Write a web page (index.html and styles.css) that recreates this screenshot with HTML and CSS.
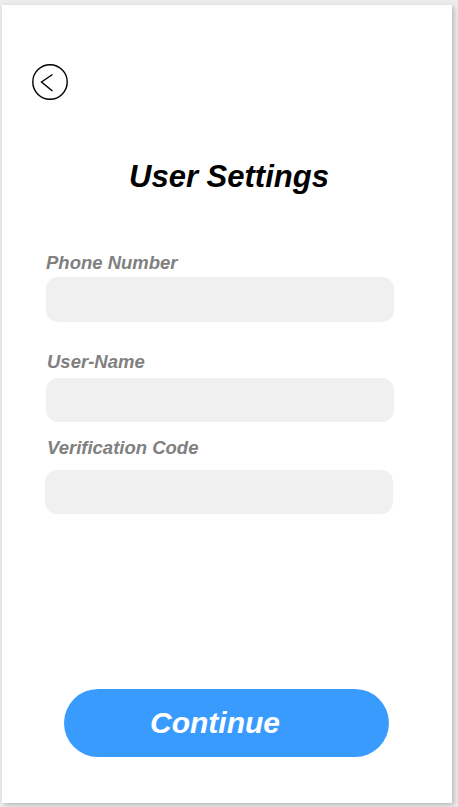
FILE: index.html
```html
<!DOCTYPE html>
<html lang="en">
<head>
<meta charset="utf-8">
<title>User Settings</title>
<link rel="stylesheet" href="styles.css">
</head>
<body>
<div class="card">
  <button class="back" aria-label="Back">
    <svg width="36" height="36" viewBox="0 0 36 36">
      <circle cx="18" cy="18" r="17.2" fill="none" stroke="#000" stroke-width="1.4"/>
      <polyline points="20.5,10.5 9.5,18 20.5,27" fill="none" stroke="#000" stroke-width="1.4"/>
    </svg>
  </button>
  <h1 class="title">User Settings</h1>
  <div class="field field-phone">
    <label class="label">Phone Number</label>
    <div class="input"></div>
  </div>
  <div class="field field-user">
    <label class="label">User-Name</label>
    <div class="input"></div>
  </div>
  <div class="field field-code">
    <label class="label">Verification Code</label>
    <div class="input"></div>
  </div>
  <button class="continue">Continue</button>
</div>
</body>
</html>
```

FILE: styles.css
```css
html, body {
  margin: 0;
  padding: 0;
}
body {
  width: 458px;
  height: 807px;
  background: #ececec;
  font-family: "Liberation Sans", Arial, sans-serif;
  overflow: hidden;
}
.card {
  box-sizing: border-box;
  margin: 5px 0 0 2px;
  width: 450px;
  height: 798px;
  background: #fff;
  box-shadow: 2px 2px 5px rgba(0, 0, 0, 0.22);
  display: flex;
  flex-direction: column;
  padding: 59px 0 0 30px;
}
.back {
  width: 36px;
  height: 36px;
  padding: 0;
  border: 0;
  background: none;
  display: block;
}
.back svg {
  display: block;
}
.title {
  margin: 60px 0 0 -26px;
  font-size: 31px;
  line-height: 34px;
  font-weight: bold;
  font-style: italic;
  text-align: center;
  color: #000;
}
.field {
  display: flex;
  flex-direction: column;
  margin-left: 14px;
}
.label {
  font-size: 18.5px;
  line-height: 20px;
  font-weight: bold;
  font-style: italic;
  color: #808080;
  margin-left: 0;
}
.input {
  width: 348px;
  height: 45px;
  background: #f0f0f0;
  border-radius: 12px;
}
.field-phone {
  margin-top: 59px;
}
.field-phone .input {
  margin-top: 4px;
}
.field-user {
  margin-top: 30px;
}
.field-user .label {
  margin-left: 1px;
}
.field-user .input {
  margin-top: 6px;
  height: 44px;
}
.field-code {
  margin-top: 16px;
  margin-left: 13px;
}
.field-code .label {
  margin-left: 2px;
}
.field-code .input {
  margin-top: 12px;
  height: 44px;
}
.continue {
  margin: auto 0 46px 32px;
  width: 325px;
  height: 68px;
  border: 0;
  border-radius: 34px;
  background: #3a9bff;
  color: #fff;
  font-family: "Liberation Sans", Arial, sans-serif;
  font-size: 30px;
  font-weight: bold;
  font-style: italic;
  padding: 0 23px 0 0;
}
```
